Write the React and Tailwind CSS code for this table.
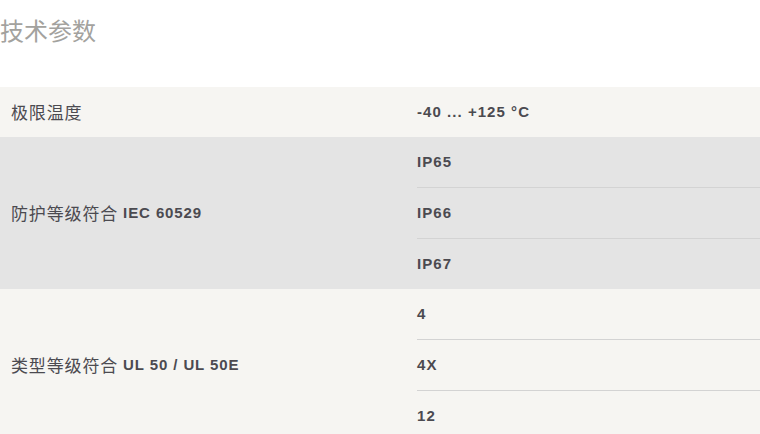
import React from "react";

const rows = [
  { zh: "极限温度", en: "", values: ["-40 ... +125 °C"], bg: "bg-[#f6f5f2]" },
  { zh: "防护等级符合", en: "IEC 60529", values: ["IP65", "IP66", "IP67"], bg: "bg-[#e4e4e4]" },
  { zh: "类型等级符合", en: "UL 50 / UL 50E", values: ["4", "4X", "12"], bg: "bg-[#f6f5f2]" },
];

const font = "font-['Liberation_Sans','Noto_Sans_CJK_SC',sans-serif]";

export default function App() {
  return (
    <div className={`w-[760px] h-[434px] overflow-hidden bg-white ${font}`}>
      <div className="h-[87px] pt-[12px]">
        <h2 className="text-[24px] leading-[36px] text-[#a3a29e] font-normal font-['Noto_Sans_CJK_SC',sans-serif]">
          技术参数
        </h2>
      </div>
      {rows.map((row) => (
        <div key={row.zh} className={`flex ${row.bg}`}>
          <div className="w-[417px] shrink-0 flex items-center pl-[11px] text-[#4b4a50] whitespace-pre">
            <span className="text-[17px] tracking-[0.05em] font-['Noto_Sans_CJK_SC',sans-serif]">{row.zh}</span>
            {row.en && (
              <span className="font-bold text-[15px] tracking-[0.06em] pl-[5px]">{row.en}</span>
            )}
          </div>
          <div className="flex-1 flex flex-col">
            {row.values.map((v, i) => (
              <div
                key={v}
                className={`flex items-center text-[15px] font-bold text-[#4b4a50] tracking-[0.07em] ${
                  i > 0 ? "border-t border-[#d3d3d3] h-[51px]" : "h-[50px]"
                }`}
              >
                {v}
              </div>
            ))}
          </div>
        </div>
      ))}
    </div>
  );
}
